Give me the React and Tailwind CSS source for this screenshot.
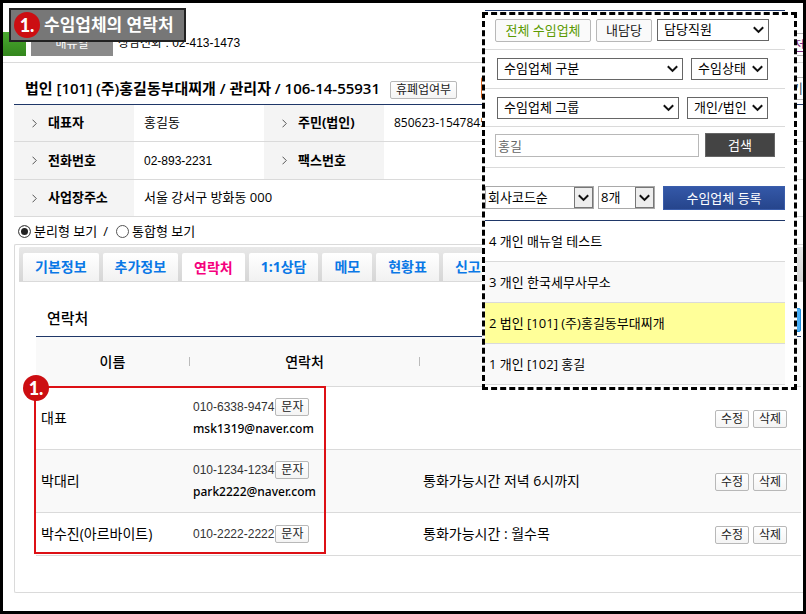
import React from "react";

const FONT = "font-['Open_Sans','Noto_Sans_CJK_KR',sans-serif]";
const THIN = "font-['Liberation_Sans','Noto_Sans_CJK_KR',sans-serif]";

function SmallButton({ children, className = "w-[34px]" }) {
  return (
    <button
      type="button"
      className={`h-[18px] shrink-0 rounded-xs border border-[#b8b8b8] bg-linear-to-b from-white to-[#f4f4f4] text-center text-xs leading-4 text-[#222] ${className}`}
    >
      {children}
    </button>
  );
}

function InfoLabel({ children }) {
  return (
    <th scope="row" className="border-b border-[#dadada] bg-[#f4f4f4] pl-[18px] text-left text-[13px] font-bold">
      <span className="flex items-center gap-[11px]">
        <svg className="h-[9px] w-[5px]" viewBox="0 0 5 9" fill="none" stroke="#555" strokeWidth="1">
          <path d="M0.5 0.7 L4.3 4.5 L0.5 8.3" />
        </svg>
        {children}
      </span>
    </th>
  );
}

function InfoValue({ children, span, className = "text-[13px]" }) {
  return (
    <td colSpan={span} className={`border-b border-[#dadada] pl-[10px] whitespace-nowrap ${className}`}>
      {children}
    </td>
  );
}

function Chevron({ className }) {
  return (
    <svg className={className} viewBox="0 0 11 8" fill="none" stroke="#111" strokeWidth="2">
      <path d="M0.8 1.2 L5.5 5.9 L10.2 1.2" />
    </svg>
  );
}

function FlatSelect({ label, className }) {
  return (
    <span className={`relative inline-flex h-[22px] ${className}`}>
      <select
        aria-label={label}
        className="h-full w-full appearance-none border border-[#666] bg-white pb-0.5 pl-[6px] text-[13px] leading-[18px] text-black"
      >
        <option>{label}</option>
      </select>
      <Chevron className="pointer-events-none absolute top-[7px] right-[5px] h-2 w-[11px]" />
    </span>
  );
}

function BoxSelect({ label, name, className }) {
  return (
    <span className={`relative inline-flex h-[23px] ${className}`}>
      <select
        aria-label={name}
        className="h-full w-full appearance-none border border-[#a9a9a9] bg-white pb-0.5 pl-[2px] text-[13px] leading-[18px] text-black"
      >
        <option>{label}</option>
      </select>
      <span className="pointer-events-none absolute top-px right-px flex h-[21px] w-[19px] items-center justify-center border border-[#777] bg-[#eee]">
        <Chevron className="h-2 w-[11px]" />
      </span>
    </span>
  );
}

function NumberDot({ className = "" }) {
  return (
    <span
      className={`flex size-[26px] shrink-0 items-center justify-center rounded-full bg-[#cc0e12] font-['Lato',sans-serif] text-lg leading-none font-black text-white ${className}`}
    >
      1.
    </span>
  );
}

const TABS = ["기본정보", "추가정보", "연락처", "1:1상담", "메모", "현황표", "신고"];

const CONTACTS = [
  { name: "대표", phone: "010-6338-9474", mail: "msk1319@naver.com", memo: "" },
  { name: "박대리", phone: "010-1234-1234", mail: "park2222@naver.com", memo: "통화가능시간 저녁 6시까지" },
  { name: "박수진(아르바이트)", phone: "010-2222-2222", mail: "", memo: "통화가능시간 : 월수목" },
];

const CLIENTS = [
  { text: "4 개인 매뉴얼 테스트", bg: "bg-white" },
  { text: "3 개인 한국세무사무소", bg: "bg-[#f9f9f9]" },
  { text: "2 법인 [101] (주)홍길동부대찌개", bg: "bg-[#ffff99]" },
  { text: "1 개인 [102] 홍길", bg: "bg-[#f9f9f9]" },
];

function Header() {
  return (
    <header className="flex h-[60px] items-end gap-[5px] border-b border-[#dadada] pb-[6px]">
      <span className="h-6 w-[23px] bg-linear-to-b from-[#4aa92f] to-[#33861d]" />
      <button type="button" className="h-6 w-[82px] bg-[#8a8a8a] text-xs leading-6 text-white">
        매뉴얼
      </button>
      <p className={`h-6 text-xs leading-[22px] whitespace-nowrap ${THIN}`}>상담전화 : 02-413-1473</p>
      <button
        type="button"
        className="ml-auto h-[23px] w-5 overflow-hidden border-y border-[#b8b8b8] pl-[10px] text-left text-[13px] leading-5 text-[#803080]"
      >
        전
      </button>
    </header>
  );
}

function CompanyInfo() {
  return (
    <section className="ml-[11px]">
      <div className="flex h-[42px] items-center border-b border-[#1f3768] pt-[9px] pl-[11px]">
        <h1 className="text-[15px] font-semibold whitespace-nowrap">법인 [101] (주)홍길동부대찌개 / 관리자 / 106-14-55931</h1>
        <SmallButton className="mt-[3px] ml-[10px] w-[67px]">휴폐업여부</SmallButton>
        <span className="ml-6 h-[22px] w-8 rounded-xs bg-[#d8641c]" />
        <button
          type="button"
          className="ml-auto h-[23px] w-5 overflow-hidden border-y border-[#b8b8b8] pl-2 text-left text-[13px] leading-5 text-[#456]"
        >
          기
        </button>
      </div>
      <table className="w-full table-fixed border-separate border-spacing-0">
        <colgroup>
          <col className="w-[120px]" />
          <col className="w-[130px]" />
          <col className="w-[120px]" />
          <col />
        </colgroup>
        <tbody>
          <tr className="h-[37px]">
            <InfoLabel>대표자</InfoLabel>
            <InfoValue>홍길동</InfoValue>
            <InfoLabel>주민(법인)</InfoLabel>
            <InfoValue className="text-xs">850623-1547845</InfoValue>
          </tr>
          <tr className="h-[38px]">
            <InfoLabel>전화번호</InfoLabel>
            <InfoValue className={`text-xs ${THIN}`}>02-893-2231</InfoValue>
            <InfoLabel>팩스번호</InfoLabel>
            <InfoValue />
          </tr>
          <tr className="h-[37px]">
            <InfoLabel>사업장주소</InfoLabel>
            <InfoValue span={3}>서울 강서구 방화동 000</InfoValue>
          </tr>
        </tbody>
      </table>
      <div className="flex h-[27px] items-center pt-0.5 pl-1 text-[13px]">
        <label className="flex items-center gap-[3px]">
          <input
            type="radio"
            name="view"
            defaultChecked
            className="size-[13px] appearance-none rounded-full border border-[#555] bg-white checked:bg-[#222] checked:shadow-[inset_0_0_0_2px_white]"
          />
          분리형 보기
        </label>
        <span className="mr-2 ml-[6px]">/</span>
        <label className="flex items-center gap-[3px]">
          <input
            type="radio"
            name="view"
            className="size-[13px] appearance-none rounded-full border border-[#555] bg-white checked:bg-[#222] checked:shadow-[inset_0_0_0_2px_white]"
          />
          통합형 보기
        </label>
      </div>
    </section>
  );
}

function ContactPanel() {
  return (
    <section className="ml-[11px] rounded-l-xs border-y border-l border-[#dadada] pt-0.5 pl-1">
      <nav className="flex h-[35px] gap-1 overflow-hidden rounded-tl-xs border-b border-[#dadada] bg-linear-to-b from-[#e8e8e8] to-[#d6d6d6] pt-[6px] pl-1">
        {TABS.map((tab) => (
          <button
            key={tab}
            type="button"
            className={`shrink-0 rounded-t-xs px-3 text-sm leading-6 font-bold ${
              tab === "연락처" ? "-mb-px bg-white text-[#f5007d]" : "bg-linear-to-b from-white to-[#f1f1f1] text-[#0a78e6]"
            }`}
          >
            {tab}
          </button>
        ))}
      </nav>
      <div className="mr-0.5 ml-[17px] pb-9">
        <div className="flex h-[55px] items-center justify-between border-b border-[#1f3768] pt-[18px] pl-[11px]">
          <h2 className="text-[15px] leading-5 font-medium">연락처</h2>
          <button type="button" className="-mb-1 h-6 w-12 rounded-xs border border-[#1f8fe0] bg-[#45aef8] text-xs text-white">
            등록
          </button>
        </div>
        <div className="relative">
          <table className="w-full table-fixed border-separate border-spacing-0 text-sm">
            <colgroup>
              <col className="w-[154px]" />
              <col className="w-[230px]" />
              <col />
              <col className="w-[90px]" />
            </colgroup>
            <thead>
              <tr className="h-[50px] bg-[#f9f9f9]">
                {["이름", "연락처"].map((label) => (
                  <th key={label} scope="col" className="border-b border-[#dadada] p-0 font-medium">
                    <span className="flex items-center">
                      <span className="flex-1">{label}</span>
                      <span className="h-[9px] w-px bg-[#bbb]" />
                    </span>
                  </th>
                ))}
                <th scope="col" className="border-b border-[#dadada]" />
                <th scope="col" className="border-b border-[#dadada]" />
              </tr>
            </thead>
            <tbody>
              {CONTACTS.map((row) => (
                <tr key={row.name} className={`${row.mail ? "h-[63px]" : "h-[43px]"} even:bg-[#f9f9f9]`}>
                  <td className="border-b border-[#dadada] p-0 pl-[5px] whitespace-nowrap">{row.name}</td>
                  <td className="border-b border-[#dadada] p-0 pl-[3px]">
                    <span className="flex h-[22px] items-center gap-px">
                      <span className={`text-xs text-[#333] ${THIN}`}>{row.phone}</span>
                      <SmallButton>문자</SmallButton>
                    </span>
                    {row.mail && (
                      <span className="block font-['Noto_Sans',sans-serif] text-xs leading-[22px] font-medium">{row.mail}</span>
                    )}
                  </td>
                  <td className="border-b border-[#dadada] p-0 pl-[3px] whitespace-nowrap">{row.memo}</td>
                  <td className="border-b border-[#dadada] p-0 pt-0.5">
                    <span className="flex gap-1 pl-1">
                      <SmallButton>수정</SmallButton>
                      <SmallButton>삭제</SmallButton>
                    </span>
                  </td>
                </tr>
              ))}
            </tbody>
          </table>
          <div className="pointer-events-none absolute top-[49px] bottom-[2px] -left-[2px] w-[292px] border-2 border-[#dd1015]">
            <NumberDot className="absolute -top-[13px] -left-[13px]" />
          </div>
        </div>
      </div>
    </section>
  );
}

function ClientPanel() {
  return (
    <aside className="absolute top-[9px] right-[6px] w-[315px] border-[3px] border-dashed border-black bg-white pr-[9px]">
      <span className="absolute -top-[5px] left-0 h-px w-[300px] bg-[#1f3768]" />
      <div className="flex h-[35px] items-center gap-[5px] border-b border-[#dadada] pb-1 pl-[10px]">
        <button type="button" className="h-[23px] w-24 rounded-xs border border-[#b8b8b8] bg-[#fafafa] text-[13px] leading-5 text-[#5b9a00]">
          전체 수임업체
        </button>
        <button type="button" className="h-[23px] w-14 rounded-xs border border-[#b8b8b8] bg-[#fafafa] text-[13px] leading-5 text-[#222]">
          내담당
        </button>
        <FlatSelect label="담당직원" className="w-28" />
      </div>
      <div className="flex h-[39px] items-center gap-2 border-b border-[#dadada] pl-3">
        <FlatSelect label="수임업체 구분" className="w-[186px]" />
        <FlatSelect label="수임상태" className="w-[77px]" />
      </div>
      <div className="flex h-[38px] items-center gap-2 border-b border-[#dadada] pl-3">
        <FlatSelect label="수임업체 그룹" className="w-[182px]" />
        <FlatSelect label="개인/법인" className="w-[81px]" />
      </div>
      <div className="flex h-[41px] items-center gap-[6px] border-b border-[#dadada] pb-1 pl-[10px]">
        <input
          type="text"
          aria-label="수임업체 검색"
          defaultValue="홍길"
          className="h-[23px] w-[204px] border border-[#b8b8b8] px-0.5 text-[13px] leading-5 text-[#666]"
        />
        <button type="button" className="h-6 w-[70px] border border-[#666] bg-[#444] text-[13px] leading-5 text-white">
          검색
        </button>
      </div>
      <div className="flex h-[53px] items-center gap-1 border-b border-[#1f3768] pt-[7px]">
        <BoxSelect name="정렬" label="회사코드순" className="w-[109px]" />
        <BoxSelect name="표시 개수" label="8개" className="w-[57px]" />
        <button
          type="button"
          className="ml-auto h-6 w-[122px] border border-[#3a5dab] bg-linear-to-b from-[#3458a8] to-[#26458c] text-[13px] leading-5 text-white"
        >
          수임업체 등록
        </button>
      </div>
      <ul className="pb-0.5">
        {CLIENTS.map((client) => (
          <li key={client.text} className={`h-[41px] border-b border-[#dadada] pl-1 text-[13px] leading-10 whitespace-nowrap ${client.bg}`}>
            {client.text}
          </li>
        ))}
      </ul>
    </aside>
  );
}

export default function App() {
  return (
    <div className={`relative min-h-screen overflow-hidden border-[3px] border-black bg-white text-black ${FONT}`}>
      <Header />
      <CompanyInfo />
      <ContactPanel />
      <ClientPanel />
      <div className="absolute top-[5px] left-[6px] flex h-[34px] items-center gap-1 border-2 border-[#222] bg-[#777] pr-[10px] pl-[3px]">
        <NumberDot />
        <strong className="text-[17px] leading-6 font-bold whitespace-nowrap text-white">수임업체의 연락처</strong>
      </div>
    </div>
  );
}
